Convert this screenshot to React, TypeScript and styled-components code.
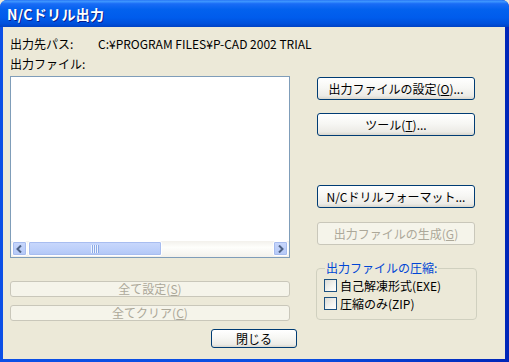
import React from "react";
import styled, { createGlobalStyle } from "styled-components";

const GlobalStyle = createGlobalStyle`
  html, body {
    margin: 0;
    padding: 0;
    background: #ece9d8;
  }
  * {
    box-sizing: border-box;
  }
`;

const FONT = `"Noto Sans CJK JP", "Liberation Sans", sans-serif`;

const Window = styled.div`
  width: 509px;
  height: 362px;
  display: flex;
  flex-direction: column;
  background: linear-gradient(to right, #0b4fe6 0%, #0a4ee0 60%, #0026b8 100%);
  border-radius: 7px 7px 0 0;
  overflow: hidden;
  font-family: ${FONT};
  font-size: 12px;
  color: #000;
`;

const TitleBar = styled.div`
  height: 27px;
  flex-shrink: 0;
  display: flex;
  align-items: center;
  padding: 1px 0 0 7px;
  background: linear-gradient(
    to bottom,
    #2a78f5 0%,
    #3d95ff 6%,
    #1a6cf6 14%,
    #0361ee 35%,
    #005cec 65%,
    #0050db 88%,
    #0042c4 100%
  );
`;

const TitleText = styled.span`
  color: #fff;
  font-weight: bold;
  font-size: 14px;
  letter-spacing: 0.3px;
  text-shadow: 1px 1px 0 #0a1e8c;
`;

const Body = styled.div`
  flex: 1;
  margin: 0 4px 3px 3px;
  background: #ece9d8;
  padding: 9px 0 0 7px;
  display: flex;
  flex-direction: column;
`;

const InfoRow = styled.div`
  display: flex;
  height: 16px;
  line-height: 16px;
  margin-bottom: 4px;
  white-space: nowrap;
`;

const InfoLabel = styled.span`
  width: 88px;
`;

const Main = styled.div`
  display: flex;
  gap: 27px;
`;

const LeftCol = styled.div`
  width: 280px;
  display: flex;
  flex-direction: column;
`;

const RightCol = styled.div`
  width: 161px;
  padding-top: 1px;
  display: flex;
  flex-direction: column;
  align-items: flex-start;
`;

const ListBox = styled.div`
  height: 182px;
  border: 1px solid #7f9db9;
  background: #fff;
  display: flex;
  flex-direction: column;
  justify-content: flex-end;
`;

const HScroll = styled.div`
  height: 16px;
  display: flex;
  align-items: stretch;
  padding: 0 1px 1px 1px;
  background: linear-gradient(to bottom, #f3f1ec 0%, #fefefb 40%, #f3f1ec 100%);
`;

const ArrowBtn = styled.div`
  width: 15px;
  display: flex;
  align-items: center;
  justify-content: center;
  border: 1px solid #fff;
  border-radius: 2px;
  background: linear-gradient(to bottom, #c8d7fc 0%, #b4c8f6 100%);
  box-shadow: inset 0 0 0 1px #a6bbee;
`;

const Track = styled.div`
  flex: 1;
  display: flex;
  padding: 0 1px;
`;

const Thumb = styled.div`
  width: 134px;
  display: flex;
  align-items: center;
  justify-content: center;
  border: 1px solid #fff;
  border-radius: 2px;
  background: linear-gradient(to bottom, #c9d8fc 0%, #bccffa 60%, #b1c6f5 100%);
  box-shadow: inset 0 0 0 1px #a8bdf0;
`;

const Grip = styled.div`
  width: 8px;
  height: 8px;
  background: repeating-linear-gradient(
    to right,
    #eef3fe 0px,
    #eef3fe 1px,
    #8caae6 1px,
    #8caae6 2px
  );
`;

const XPButton = styled.button<{ $w: number; $h: number; $mt?: number }>`
  width: ${(p) => p.$w}px;
  height: ${(p) => p.$h}px;
  margin-top: ${(p) => p.$mt ?? 0}px;
  padding: 0;
  font-family: ${FONT};
  font-size: 12px;
  color: #000;
  border: 1px solid #003c74;
  border-radius: 3px;
  background: linear-gradient(to bottom, #ffffff 0%, #f7f7f4 45%, #ecebe6 85%, #d8d6cd 100%);
  display: flex;
  align-items: center;
  justify-content: center;
  line-height: 1;
  white-space: nowrap;

  &:disabled {
    border-color: #c9c7ba;
    background: #f5f4ea;
    color: #aca899;
  }
`;

const GroupBox = styled.fieldset`
  width: 161px;
  height: 59px;
  margin: 16px 0 0 -1px;
  padding: 4px 0 0 7px;
  border: 1px solid #d0d0bf;
  border-radius: 4px;
  display: flex;
  flex-direction: column;
  gap: 5px;
`;

const Legend = styled.legend`
  color: #0046d5;
  padding: 0 1px;
  margin-left: 1px;
  line-height: 14px;
`;

const CheckRow = styled.label`
  display: flex;
  align-items: center;
  gap: 3px;
  height: 13px;
  white-space: nowrap;
`;

const CheckBox = styled.span`
  width: 13px;
  height: 13px;
  border: 1px solid #1c5180;
  background: linear-gradient(135deg, #dcdcd7 0%, #f4f4f0 60%, #ffffff 100%);
`;

const Footer = styled.div`
  display: flex;
  justify-content: center;
  padding-right: 7px;
  margin-top: 8px;
`;

const Arrow = ({ dir }: { dir: "l" | "r" }) => (
  <svg width="7" height="8" viewBox="0 0 7 8">
    <path
      d={dir === "l" ? "M5 0.5 L1.5 4 L5 7.5" : "M2 0.5 L5.5 4 L2 7.5"}
      fill="none"
      stroke="#4d6185"
      strokeWidth="2"
    />
  </svg>
);

export default function App() {
  return (
    <>
      <GlobalStyle />
      <Window>
        <TitleBar>
          <TitleText>N/Cドリル出力</TitleText>
        </TitleBar>
        <Body>
          <InfoRow>
            <InfoLabel>出力先パス:</InfoLabel>
            <span>C:¥PROGRAM FILES¥P-CAD 2002 TRIAL</span>
          </InfoRow>
          <InfoRow>
            <InfoLabel>出力ファイル:</InfoLabel>
          </InfoRow>
          <Main>
            <LeftCol>
              <ListBox>
                <HScroll>
                  <ArrowBtn>
                    <Arrow dir="l" />
                  </ArrowBtn>
                  <Track>
                    <Thumb>
                      <Grip />
                    </Thumb>
                  </Track>
                  <ArrowBtn>
                    <Arrow dir="r" />
                  </ArrowBtn>
                </HScroll>
              </ListBox>
              <XPButton $w={280} $h={16} $mt={23} disabled>
                全て設定(<u>S</u>)
              </XPButton>
              <XPButton $w={280} $h={16} $mt={8} disabled>
                全てクリア(<u>C</u>)
              </XPButton>
            </LeftCol>
            <RightCol>
              <XPButton $w={158} $h={23}>
                出力ファイルの設定(<u>O</u>)...
              </XPButton>
              <XPButton $w={158} $h={23} $mt={13}>
                ツール(<u>T</u>)...
              </XPButton>
              <XPButton $w={158} $h={23} $mt={49}>
                N/Cドリルフォーマット...
              </XPButton>
              <XPButton $w={158} $h={23} $mt={14} disabled>
                出力ファイルの生成(<u>G</u>)
              </XPButton>
              <GroupBox>
                <Legend>出力ファイルの圧縮:</Legend>
                <CheckRow>
                  <CheckBox />
                  自己解凍形式(EXE)
                </CheckRow>
                <CheckRow>
                  <CheckBox />
                  圧縮のみ(ZIP)
                </CheckRow>
              </GroupBox>
            </RightCol>
          </Main>
          <Footer>
            <XPButton $w={86} $h={19}>
              閉じる
            </XPButton>
          </Footer>
        </Body>
      </Window>
    </>
  );
}
